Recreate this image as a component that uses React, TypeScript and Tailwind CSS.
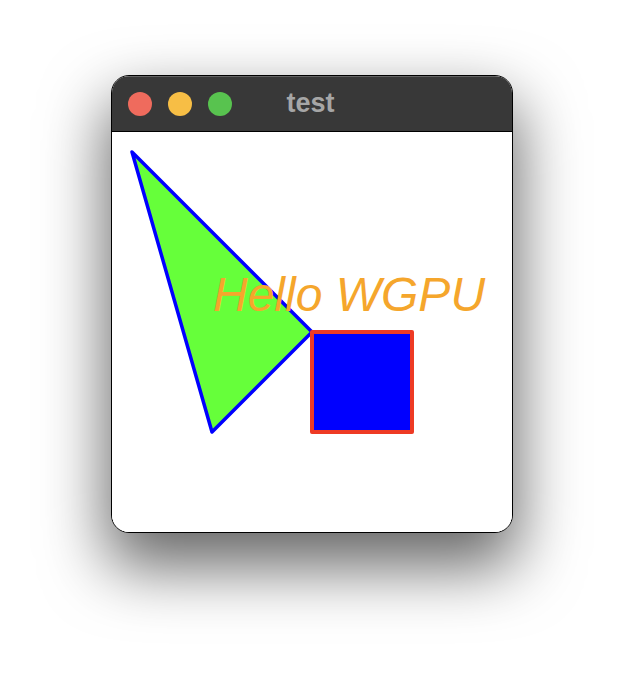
import React from "react";

export default function App() {
  return (
    <div className="w-[624px] h-[680px] bg-white flex justify-center pt-[75px]" style={{ fontFamily: '"Liberation Sans", Arial, sans-serif' }}>
      <div className="w-[402px] h-[458px] rounded-[18px] border border-black bg-white overflow-hidden flex flex-col shadow-[0_30px_64px_4px_rgba(0,0,0,0.6)]">
        <div className="relative h-[56px] shrink-0 bg-[#383838] border-b border-black shadow-[inset_0_1px_0_rgba(255,255,255,0.22)] flex items-center">
          <div className="flex items-center gap-[16px] pl-[16px]">
            <div className="w-[24px] h-[24px] rounded-full bg-[#ef6b5d]" />
            <div className="w-[24px] h-[24px] rounded-full bg-[#f7be45]" />
            <div className="w-[24px] h-[24px] rounded-full bg-[#58c34f]" />
          </div>
          <div className="absolute inset-0 flex items-center justify-center pr-[3px] text-[27px] font-bold text-[#a6a6a6] leading-none">
            test
          </div>
        </div>
        <div className="w-[400px] h-[400px] bg-white">
          <svg width="400" height="400" viewBox="0 0 400 400">
            <polygon points="20,20 200,200 100,300" fill="#66ff3a" stroke="#0000ff" strokeWidth="3.5" strokeLinejoin="round" />
            <text x="101" y="179" fill="#f5a62c" fontSize="48" fontStyle="italic" fontFamily='"Liberation Sans", Arial, sans-serif'>Hello WGPU</text>
            <rect x="200" y="200" width="100" height="100" fill="#0000ff" stroke="#ee3a24" strokeWidth="4" strokeLinejoin="round" />
          </svg>
        </div>
      </div>
    </div>
  );
}
